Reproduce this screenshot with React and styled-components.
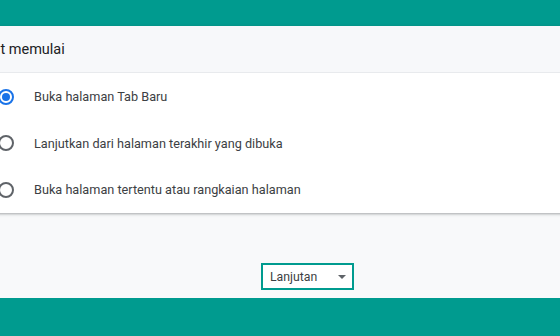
import React, { useState } from 'react'
import styled, { createGlobalStyle } from 'styled-components'

const Global = createGlobalStyle`
  html, body { margin: 0; padding: 0; overflow: hidden; }
  body {
    width: 560px;
    height: 336px;
    background: #f8f9fa;
    font-family: Roboto, "Liberation Sans", Arial, sans-serif;
  }
`

const Page = styled.div`
  width: 560px;
  height: 336px;
  display: flex;
  flex-direction: column;
  overflow: hidden;
`

const Bar = styled.div`
  height: ${(p) => p.h}px;
  flex: 0 0 auto;
  background: #009b8f;
`

const Card = styled.section`
  margin-left: -46px;
  width: 700px;
  background: #fff;
  box-shadow: 0 1px 2px rgba(60, 64, 67, 0.3), 0 1px 3px 1px rgba(60, 64, 67, 0.12);
`

const CardHeader = styled.div`
  height: 46px;
  display: flex;
  align-items: center;
  padding-left: 22px;
  background: #f7f8fa;
  border-bottom: 1px solid #e8eaed;
  font-size: 14.5px;
  color: #202124;
`

const Row = styled.label`
  height: 46.5px;
  display: flex;
  align-items: center;
  gap: 20px;
  padding: 1px 0 0 44px;
  box-sizing: border-box;
  font-size: 12.7px;
  color: #3c4043;
  cursor: pointer;
`

const Radio = styled.span`
  width: 16px;
  height: 16px;
  box-sizing: border-box;
  border-radius: 50%;
  border: 2px solid ${(p) => (p.checked ? '#1a73e8' : '#5f6368')};
  display: flex;
  align-items: center;
  justify-content: center;
  &::after {
    content: '';
    width: 8px;
    height: 8px;
    border-radius: 50%;
    background: ${(p) => (p.checked ? '#1a73e8' : 'transparent')};
  }
`

const Footer = styled.div`
  flex: 1;
  display: flex;
  align-items: flex-end;
  padding: 0 0 8px 261px;
`

const Advanced = styled.button`
  width: 93px;
  height: 27px;
  box-sizing: border-box;
  border: 2px solid #009b8f;
  background: #fff;
  display: flex;
  align-items: center;
  justify-content: space-between;
  padding: 0 6px 0 7px;
  font-family: Roboto, "Liberation Sans", Arial, sans-serif;
  font-size: 12.3px;
  color: #3c4043;
  cursor: pointer;
`

const Caret = styled.span`
  width: 0;
  height: 0;
  border-left: 4px solid transparent;
  border-right: 4px solid transparent;
  border-top: 4px solid #5f6368;
`

const options = [
  'Buka halaman Tab Baru',
  'Lanjutkan dari halaman terakhir yang dibuka',
  'Buka halaman tertentu atau rangkaian halaman',
]

export default function App() {
  const [selected, setSelected] = useState(0)
  return (
    <Page>
      <Global />
      <Bar h={26} />
      <Card>
        <CardHeader>Saat memulai</CardHeader>
        {options.map((o, i) => (
          <Row key={o} onClick={() => setSelected(i)}>
            <Radio checked={selected === i} />
            {o}
          </Row>
        ))}
      </Card>
      <Footer>
        <Advanced>
          Lanjutan
          <Caret />
        </Advanced>
      </Footer>
      <Bar h={38} />
    </Page>
  )
}
